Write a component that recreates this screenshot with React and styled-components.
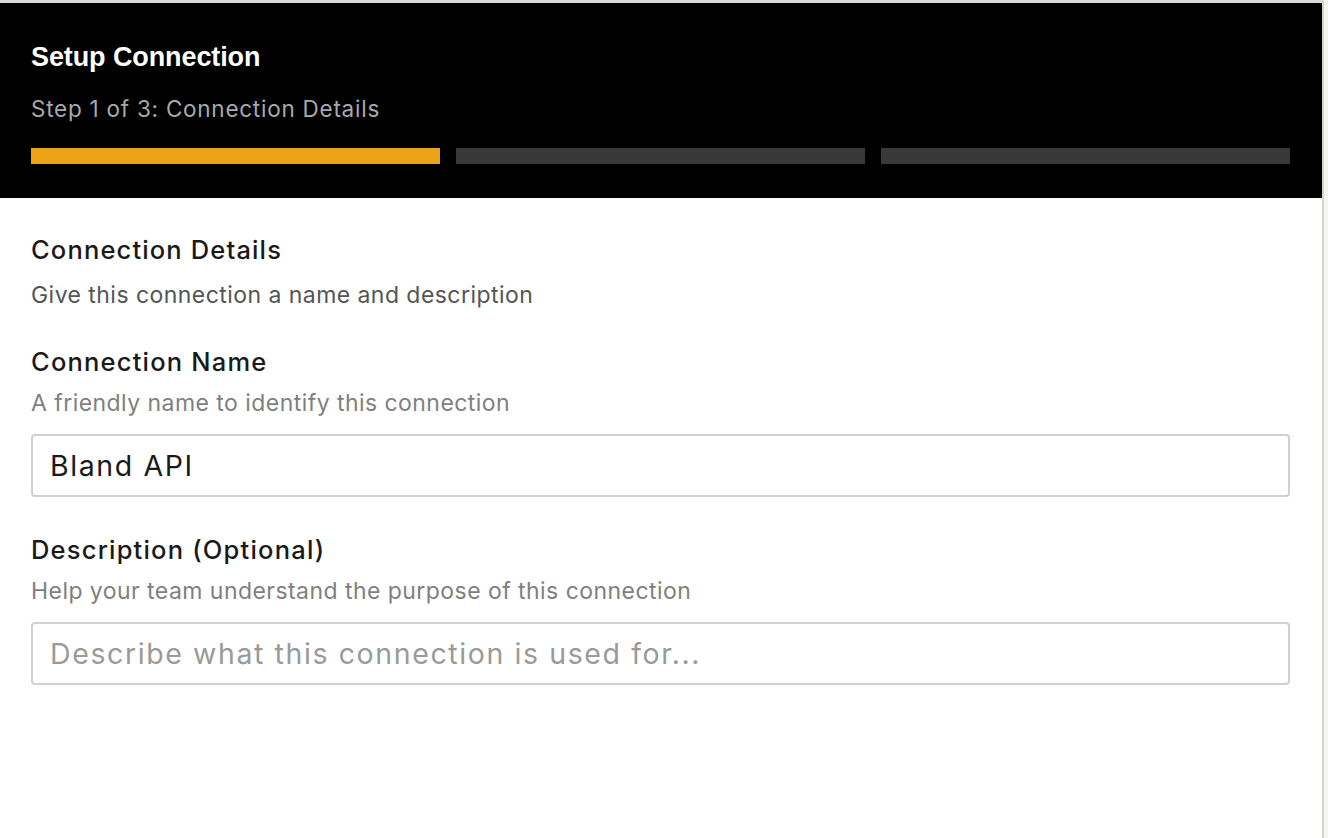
import React from "react";
import styled, { createGlobalStyle } from "styled-components";

const Global = createGlobalStyle`
  html, body { margin: 0; padding: 0; background: #f4f4ef; }
  body { font-family: Inter, "Noto Sans", sans-serif; }
  * { box-sizing: border-box; }
`;

const Panel = styled.div`
  width: 1324px;
  min-height: 838px;
  background: #ffffff;
  border-top: 3px solid #dadad6;
  border-right: 2px solid #d4d4d0;
  display: flex;
  flex-direction: column;
`;

const Header = styled.header`
  background: #000;
  padding: 38px 32px 34px 31px;
  display: flex;
  flex-direction: column;
`;

const Title = styled.h1`
  margin: 0;
  font-family: "Liberation Sans", Arial, sans-serif;
  font-weight: 700;
  font-size: 27px;
  line-height: 32px;
  letter-spacing: -0.1px;
  color: #fff;
`;

const Subtitle = styled.div`
  margin-top: 22px;
  font-size: 22.5px;
  line-height: 28px;
  letter-spacing: 0.75px;
  color: #a9a9a9;
`;

const Steps = styled.div`
  margin-top: 25px;
  display: grid;
  grid-template-columns: repeat(3, 1fr);
  gap: 16px;
`;

const Step = styled.div`
  height: 16px;
  background: ${(p) => (p.$active ? "#eca315" : "#383838")};
`;

const Body = styled.main`
  padding: 36px 32px 40px 31px;
  display: flex;
  flex-direction: column;
`;

const SectionTitle = styled.h2`
  margin: 0;
  font-size: 25.5px;
  font-weight: 500;
  line-height: 32px;
  letter-spacing: 1.15px;
  color: #1a1a1a;
`;

const SectionText = styled.p`
  margin: 15px 0 0;
  font-size: 23px;
  line-height: 28px;
  letter-spacing: 0.45px;
  color: #555;
`;

const Field = styled.div`
  margin-top: 37px;
  display: flex;
  flex-direction: column;
`;

const Label = styled.label`
  font-size: 25.5px;
  font-weight: 500;
  line-height: 32px;
  letter-spacing: 1.2px;
  color: #1a1a1a;
`;

const Help = styled.div`
  margin-top: 11px;
  font-size: 23px;
  line-height: 28px;
  letter-spacing: 0.45px;
  color: #7f7f7f;
`;

const Input = styled.input`
  margin-top: 17px;
  height: 63px;
  width: 100%;
  border: 2px solid #d0d0d0;
  border-radius: 4px;
  padding: 0 17px;
  font-family: Inter, "Noto Sans", sans-serif;
  font-size: 28.5px;
  letter-spacing: 1.6px;
  color: #1a1a1a;
  background: #fff;
  outline: none;
  &::placeholder { color: #9a9a9a; }
`;

export default function App() {
  return (
    <>
      <Global />
      <Panel>
        <Header>
          <Title>Setup Connection</Title>
          <Subtitle>Step 1 of 3: Connection Details</Subtitle>
          <Steps>
            <Step $active />
            <Step />
            <Step />
          </Steps>
        </Header>
        <Body>
          <SectionTitle>Connection Details</SectionTitle>
          <SectionText>Give this connection a name and description</SectionText>
          <Field>
            <Label>Connection Name</Label>
            <Help>A friendly name to identify this connection</Help>
            <Input defaultValue="Bland API" />
          </Field>
          <Field>
            <Label>Description (Optional)</Label>
            <Help>Help your team understand the purpose of this connection</Help>
            <Input placeholder="Describe what this connection is used for..." />
          </Field>
        </Body>
      </Panel>
    </>
  );
}
